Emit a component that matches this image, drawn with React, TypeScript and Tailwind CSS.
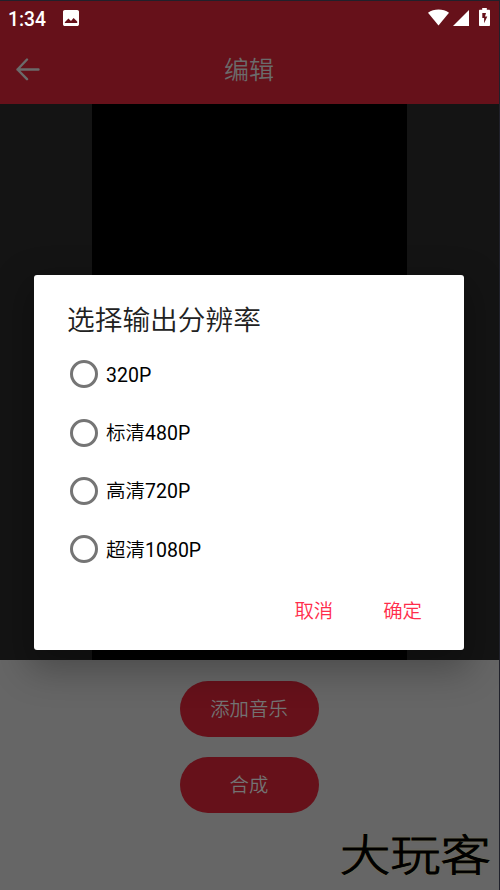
import React, { useState } from "react";

const resolutions = [
  { label: "", size: "320P" },
  { label: "标清", size: "480P" },
  { label: "高清", size: "720P" },
  { label: "超清", size: "1080P" },
];

const StatusBar: React.FC = () => (
  <div className="flex h-[35px] items-start justify-between pl-2 pr-[9px] text-white">
    <div className="flex gap-[17px] pt-[9px]">
      <span className="w-[38px] whitespace-nowrap text-[19.3px] font-medium leading-[20px]">1:34</span>
      <svg className="h-4 w-4" viewBox="0 0 16 16">
        <path
          fill="currentColor"
          fillRule="evenodd"
          d="M1.8 0h12.4C15.2 0 16 .8 16 1.8v12.4c0 1-.8 1.8-1.8 1.8H1.8C.8 16 0 15.2 0 14.2V1.8C0 .8.8 0 1.8 0ZM1.8 13h12.4V11.6L10.6 8l-2.6 3-2.6-2.4-3.6 3.6V13Z"
        />
      </svg>
    </div>
    <div className="flex items-end pt-[7px]">
      <svg className="h-[17px] w-[21px]" viewBox="0 0 22 17">
        <path fill="currentColor" d="M0 3.4C6.2-1 15.8-1 22 3.4L11 17 0 3.4Z" />
      </svg>
      <svg className="ml-[4px] h-4 w-4" viewBox="0 0 16 16">
        <path fill="currentColor" d="M16 0v16H0L16 0Z" />
      </svg>
      <svg className="ml-[10px] h-[18px] w-[11px]" viewBox="0 0 11 18">
        <path
          fill="currentColor"
          fillRule="evenodd"
          d="M3.2 0h4.6v1.8H10c.6 0 1 .4 1 1V17c0 .6-.4 1-1 1H1c-.6 0-1-.4-1-1V2.8c0-.6.4-1 1-1h2.2V0ZM7 5H3.3v5h1.8v5.2L8.3 8.6H6L7 5Z"
        />
      </svg>
    </div>
  </div>
);

const ResolutionDialog: React.FC = () => {
  const [selected, setSelected] = useState<string | null>(null);

  return (
    <div className="absolute left-[34px] top-[274px] flex h-[375px] w-[430px] flex-col rounded-[3px] bg-white pl-[33px] shadow-[0_14px_36px_6px_rgba(0,0,0,0.28)]">
      <h2 className="mt-[26px] text-[27.7px] font-[350] leading-[40px] text-[#212121]">选择输出分辨率</h2>
      <div className="mt-[4px] flex flex-col">
        {resolutions.map((item) => (
          <button
            key={item.size}
            type="button"
            onClick={() => setSelected(item.size)}
            className="flex h-[58.4px] items-center gap-2 pl-[3px] text-left text-[19.5px] text-black"
          >
            <span className="flex h-7 w-7 items-center justify-center rounded-full border-[3px] border-[#757575]">
              {selected === item.size && <span className="h-3 w-3 rounded-full bg-[#ff2d4b]" />}
            </span>
            <span className="pt-0.5">
              <span className="font-[350]">{item.label}</span>
              {item.size}
            </span>
          </button>
        ))}
      </div>
      <div className="mt-[18px] flex justify-end gap-[50px] pr-[42px] text-[19.4px] font-[350] leading-[30px] text-[#ff2d4b]">
        <button type="button">取消</button>
        <button type="button">确定</button>
      </div>
    </div>
  );
};

const App: React.FC = () => {
  return (
    <div className="relative flex h-[890px] w-[500px] flex-col overflow-hidden border-r border-t border-[#20212b] bg-[#666666] font-[Roboto,'Noto_Sans_CJK_SC',sans-serif]">
      <header className="h-[103px] shrink-0 bg-[#66111a]">
        <StatusBar />
        <div className="grid h-[66px] grid-cols-[1fr_auto_1fr] items-center text-[#6b6b6b]">
          <svg
            className="ml-4 h-[23px] w-6"
            viewBox="0 0 24 23"
            fill="none"
            stroke="currentColor"
            strokeWidth="2.4"
            strokeLinecap="round"
            strokeLinejoin="round"
          >
            <path d="M11 1.5 1.5 11.5 11 21.2M1.5 11.5h21" />
          </svg>
          <h1 className="pr-px pt-0.5 text-[25px] font-[350] leading-none">编辑</h1>
        </div>
      </header>

      {/* Video preview */}
      <div className="flex h-[556px] shrink-0 justify-center bg-[#141414] pr-px">
        <div className="w-[315px] bg-black" />
      </div>

      <div className="flex flex-col items-center gap-5 pr-px pt-[21px] text-[19.4px] font-[350] text-[#737373]">
        <button type="button" className="h-14 w-[139px] rounded-full bg-[#66111a] pt-0.5">
          添加音乐
        </button>
        <button type="button" className="h-14 w-[139px] rounded-full bg-[#66111a] pt-0.5">
          合成
        </button>
      </div>

      <ResolutionDialog />

      {/* Watermark */}
      <div className="absolute left-[340px] top-[830px] origin-left scale-x-[1.17] whitespace-nowrap text-[43px] font-light leading-[50px] text-black [-webkit-text-stroke:1px_black] [text-shadow:0_0_2px_#8a7a30]">
        大玩客
      </div>
    </div>
  );
};

export default App;
